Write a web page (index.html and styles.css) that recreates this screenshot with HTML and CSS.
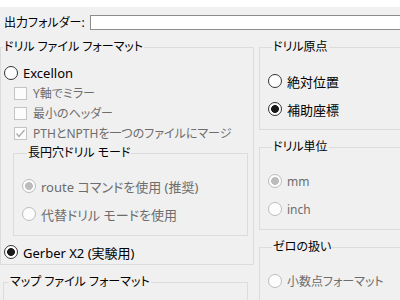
FILE: index.html
```html
<!DOCTYPE html>
<html lang="ja">
<head>
  <meta charset="UTF-8">
  <title>ドリル ファイルを生成</title>
  <link rel="stylesheet" href="styles.css">
</head>
<body>
  <div class="topbar"></div>

  <div class="folder-row">
    <label>出力フォルダー:</label>
    <input type="text" class="folder-input">
  </div>

  <div class="main">
    <div class="left-col">
      <fieldset class="group outer">
        <legend>ドリル ファイル フォーマット</legend>
        <div class="row big"><span class="radio"></span>Excellon</div>
        <div class="row sub disabled"><span class="check"></span>Y軸でミラー</div>
        <div class="row sub disabled"><span class="check"></span>最小のヘッダー</div>
        <div class="row sub disabled">
          <span class="check">
            <svg width="11" height="11" viewBox="0 0 11 11"><polyline points="1.5,5.5 4,8.5 9.5,2" fill="none" stroke="#a8a8a8" stroke-width="1.2"/></svg>
          </span>PTHとNPTHを一つのファイルにマージ
        </div>
        <fieldset class="group slot">
          <legend>長円穴ドリル モード</legend>
          <div class="row tall big disabled"><span class="radio on"></span>route コマンドを使用 (推奨)</div>
          <div class="row tall big disabled"><span class="radio"></span>代替ドリル モードを使用</div>
        </fieldset>
        <div class="row gerber big"><span class="radio on"></span>Gerber X2 (実験用)</div>
      </fieldset>

      <fieldset class="group map">
        <legend>マップ ファイル フォーマット</legend>
      </fieldset>
    </div>

    <div class="right-col">
      <fieldset class="group side">
        <legend>ドリル原点</legend>
        <div class="row tall big"><span class="radio"></span>絶対位置</div>
        <div class="row tall big"><span class="radio on"></span>補助座標</div>
      </fieldset>
      <fieldset class="group side">
        <legend>ドリル単位</legend>
        <div class="row tall disabled"><span class="radio on"></span>mm</div>
        <div class="row tall disabled"><span class="radio"></span>inch</div>
      </fieldset>
      <fieldset class="group side last">
        <legend>ゼロの扱い</legend>
        <div class="row tall disabled"><span class="radio"></span>小数点フォーマット</div>
        <div class="row tall disabled"><span class="radio"></span>ゼロを抑制しない</div>
      </fieldset>
    </div>
  </div>
</body>
</html>
```

FILE: styles.css
```css
body {
  margin: 0;
  background: #f0f0f0;
  font-family: "Noto Sans", "Noto Sans CJK JP", sans-serif;
  font-size: 12px;
  font-feature-settings: "palt";
  color: #000;
  width: 400px;
  height: 300px;
  overflow: hidden;
}
.topbar {
  height: 7px;
  background: #fff;
}
.folder-row {
  display: flex;
  align-items: center;
  height: 15px;
  margin-top: 8px;
  padding-left: 4px;
}
.folder-row label {
  flex: none;
  width: 86px;
  line-height: 15px;
  white-space: nowrap;
}
.folder-input {
  flex: none;
  width: 340px;
  height: 15px;
  box-sizing: border-box;
  margin: 0;
  padding: 0;
  border: 1px solid #8c8c8c;
  background: #fff;
}
.main {
  display: flex;
  gap: 5px;
  margin-top: 9px;
}
.left-col {
  width: 254px;
  flex: none;
}
.right-col {
  width: 170px;
  flex: none;
}
.group {
  margin: 0;
  padding: 0;
  min-width: 0;
  border: 1px solid #dcdcdc;
}
.group legend {
  padding: 0 1px;
  margin-left: 5px;
  line-height: 16px;
  height: 16px;
}
.outer {
  padding-bottom: 2px;
}
.outer > legend {
  margin-left: 2px;
}
.row {
  display: flex;
  align-items: center;
  height: 20px;
  gap: 5px;
  padding-left: 3px;
  white-space: nowrap;
}
.row.big {
  font-size: 13px;
}
.outer > .row:first-of-type {
  margin-top: 8px;
}
.row.sub {
  padding-left: 13px;
  gap: 6px;
}
.row.tall {
  height: 28px;
  padding-left: 7px;
}
.disabled {
  color: #6d6d6d;
}
.radio {
  flex: none;
  width: 14px;
  height: 14px;
  box-sizing: border-box;
  border: 1px solid #333;
  border-radius: 50%;
  background: #fff;
}
.radio.on {
  background: radial-gradient(circle, #1a1a1a 3.6px, #fff 4.2px);
}
.disabled .radio {
  border-color: #bcbcbc;
  background: #fcfcfc;
}
.disabled .radio.on {
  background: radial-gradient(circle, #bcbcbc 3.6px, #fcfcfc 4.2px);
}
.check {
  flex: none;
  width: 13px;
  height: 13px;
  box-sizing: border-box;
  border: 1px solid #c4c4c4;
  background: #fcfcfc;
  display: flex;
  align-items: center;
  justify-content: center;
}
.slot {
  margin: 2px 5px 0 12px;
  padding: 11px 0 7px 8px;
}
.slot .row.tall {
  padding-left: 0;
}
.gerber {
  margin-top: 6px;
}
.map {
  margin-top: 9px;
  margin-left: 3px;
  margin-right: 6px;
  height: 40px;
}
.side {
  padding: 12px 0 6px 8px;
  margin-bottom: 9px;
}
.side .row.tall {
  padding-left: 0;
}
.side legend {
  margin-left: 4px;
}
.last {
  padding-bottom: 0;
}
```
